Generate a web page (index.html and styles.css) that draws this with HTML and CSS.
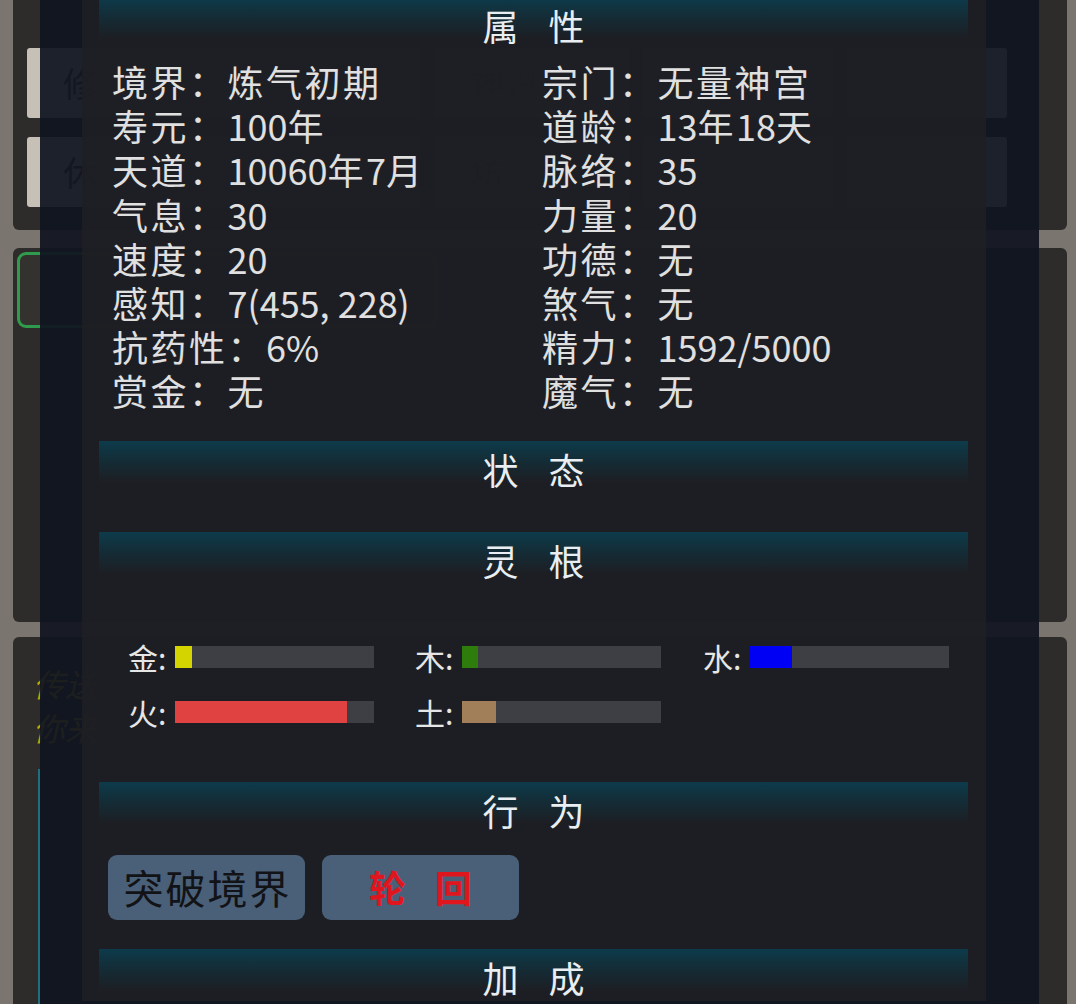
FILE: index.html
```html
<!DOCTYPE html>
<html lang="zh-CN">
<head>
<meta charset="utf-8">
<title>属性</title>
<link rel="stylesheet" href="styles.css">
</head>
<body>
<div class="app">
  <section class="panel panel-top">
    <div class="tiles">
      <div class="tile">修</div>
      <div class="tile">神识</div>
      <div class="tile"></div>
      <div class="tile"></div>
      <div class="tile">休</div>
      <div class="tile">坊</div>
      <div class="tile"></div>
      <div class="tile"></div>
    </div>
  </section>
  <section class="panel panel-mid">
    <div class="green-btn"></div>
  </section>
  <section class="panel panel-log">
    <p class="log">传送</p>
    <p class="log">你来</p>
    <div class="log-line"></div>
  </section>
</div>

<div class="overlay">
  <div class="modal">
    <section class="sec sec-attrs">
      <h2 class="sec-head">属性</h2>
      <div class="attrs">
        <div class="attr">境界：炼气初期</div>
        <div class="attr">宗门：无量神宫</div>
        <div class="attr">寿元：<span class="num">100</span>年</div>
        <div class="attr">道龄：<span class="num">13</span>年<span class="num">18</span>天</div>
        <div class="attr">天道：<span class="num">10060</span>年<span class="num">7</span>月</div>
        <div class="attr">脉络：<span class="num">35</span></div>
        <div class="attr">气息：<span class="num">30</span></div>
        <div class="attr">力量：<span class="num">20</span></div>
        <div class="attr">速度：<span class="num">20</span></div>
        <div class="attr">功德：无</div>
        <div class="attr">感知：<span class="num">7(455, 228)</span></div>
        <div class="attr">煞气：无</div>
        <div class="attr">抗药性：<span class="num">6%</span></div>
        <div class="attr">精力：<span class="num">1592/5000</span></div>
        <div class="attr">赏金：无</div>
        <div class="attr">魔气：无</div>
      </div>
    </section>

    <section class="sec sec-status">
      <h2 class="sec-head">状态</h2>
    </section>

    <section class="sec sec-roots">
      <h2 class="sec-head">灵根</h2>
      <div class="roots">
        <div class="root"><span class="root-label">金:</span><div class="bar"><div class="fill fill-gold" style="width:17px"></div></div></div>
        <div class="root"><span class="root-label">木:</span><div class="bar"><div class="fill fill-wood" style="width:16px"></div></div></div>
        <div class="root"><span class="root-label">水:</span><div class="bar"><div class="fill fill-water" style="width:42px"></div></div></div>
        <div class="root"><span class="root-label">火:</span><div class="bar"><div class="fill fill-fire" style="width:172px"></div></div></div>
        <div class="root"><span class="root-label">土:</span><div class="bar"><div class="fill fill-earth" style="width:34px"></div></div></div>
      </div>
    </section>

    <section class="sec sec-actions">
      <h2 class="sec-head">行为</h2>
      <div class="actions">
        <button class="act act-break">突破境界</button>
        <button class="act act-reborn">轮回</button>
      </div>
    </section>

    <section class="sec sec-bonus">
      <h2 class="sec-head">加成</h2>
    </section>
  </div>
</div>
</body>
</html>
```

FILE: styles.css
```css
* { box-sizing: border-box; }

html, body {
  margin: 0;
  padding: 0;
}

body {
  width: 1076px;
  height: 1004px;
  overflow: hidden;
  background: #7a756f;
  font-family: "Noto Sans CJK SC", "Noto Sans", sans-serif;
  position: relative;
}

/* ---------- underlying app ---------- */
.app {
  padding: 0 9px 0 13px;
  display: flex;
  flex-direction: column;
}

.panel {
  background: #2d2c2a;
  border-radius: 6px;
}

.panel-top {
  height: 230px;
  border-radius: 0 0 6px 6px;
  padding: 48px 60px 0 14px;
}

.tiles {
  display: grid;
  grid-template-columns: 393px 195px 190px 1fr;
  grid-auto-rows: 70px;
  gap: 19px 14px;
}

.tile {
  background: #c6c0b7;
  border-radius: 3px;
  color: #3a3734;
  font-size: 34px;
  line-height: 70px;
  padding-left: 36px;
}

.panel-mid {
  margin-top: 18px;
  height: 374px;
  padding: 4px;
}

.green-btn {
  width: 420px;
  height: 76px;
  border: 3px solid #2f9b4c;
  border-radius: 9px;
  background: #33322f;
}

.panel-log {
  margin-top: 15px;
  height: 400px;
  padding: 24px 0 0 20px;
}

.log {
  margin: 0;
  color: #b9a600;
  font-size: 32px;
  line-height: 44px;
  font-style: italic;
}

.log-line {
  margin: 20px 0 0 5px;
  width: 2px;
  height: 260px;
  background: #1f6f80;
}

/* ---------- overlay / modal ---------- */
.overlay {
  position: absolute;
  top: 0;
  left: 40px;
  width: 999px;
  height: 1004px;
  background: rgba(16, 20, 32, 0.93);
  overflow: hidden;
}

.modal {
  margin-left: 42px;
  width: 904px;
  height: 100%;
  background: rgba(30, 31, 36, 0.92);
  padding: 0 18px 0 17px;
  margin-top: -3px;
}

.sec-head {
  margin: 0;
  height: 62px;
  background: linear-gradient(180deg, #0d3b4b 0px, #142c36 20px, #1a232a 34px, rgba(28, 29, 34, 0) 42px);
  color: #e8eef1;
  font-size: 36px;
  font-weight: 400;
  line-height: 56px;
  text-align: center;
  letter-spacing: 30px;
  padding-left: 30px;
}

/* attributes */
.attrs {
  display: grid;
  grid-template-columns: 430px 1fr;
  padding: 0 0 28px 13px;
}

.attr {
  color: #e0e0e0;
  font-size: 36px;
  line-height: 44.2px;
  letter-spacing: 2.5px;
  white-space: nowrap;
}

.num {
  letter-spacing: 0;
}

/* status */
.sec-status { padding-bottom: 29px; }

/* spiritual roots */
.roots {
  display: grid;
  grid-template-columns: 287px 288px 287px;
  grid-auto-rows: 22px;
  row-gap: 33px;
  padding: 52px 0 59px 29px;
}

.root {
  display: flex;
  align-items: center;
}

.root-label {
  width: 47px;
  flex: none;
  color: #e6e6e6;
  font-size: 30px;
  line-height: 22px;
}

.bar {
  width: 199px;
  height: 22px;
  background: #3e3f44;
  display: flex;
}

.fill { height: 100%; }
.fill-gold { background: #d4d400; }
.fill-wood { background: #2e7d0c; }
.fill-water { background: #0000f5; }
.fill-fire { background: #e04242; }
.fill-earth { background: #a07f59; }

/* actions */
.actions {
  display: flex;
  gap: 17px;
  padding: 11px 0 29px 9px;
}

.act {
  width: 197px;
  height: 65px;
  border: 0;
  border-radius: 9px;
  background: #4a5f78;
  font-family: "Noto Sans CJK SC", "Noto Sans", sans-serif;
  padding: 0;
  cursor: pointer;
  line-height: 60px;
}

.act-break {
  color: #121316;
  font-size: 40px;
  letter-spacing: 2px;
  padding-left: 2px;
}

.act-reborn {
  color: #e0161f;
  font-size: 37px;
  font-weight: 700;
  letter-spacing: 29px;
  padding-left: 29px;
}
```
